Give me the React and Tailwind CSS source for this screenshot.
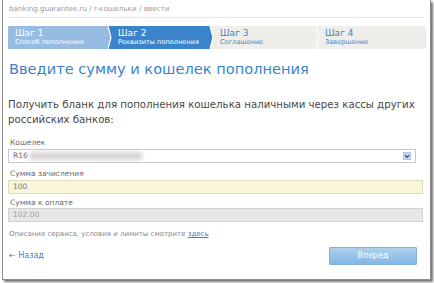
const StepSep = ({ left, right }) => (
	<svg width="5" height="23" viewBox="0 0 5 23" className="shrink-0 block">
		<polygon points="0,0 1,0 4,11.5 1,23 0,23" fill={left} />
		<polygon points="1,0 5,0 5,23 1,23 4,11.5" fill={right} />
		<polyline points="1,0 4,11.5 1,23" fill="none" stroke="#ffffff" strokeWidth="1.1" />
	</svg>
)

const Step = ({ n, title, active, done, className }) => {
	const bg = done ? 'bg-[#96bce2]' : active ? 'bg-[#3b84cb]' : 'bg-[#efeeea]'
	const color = done || active ? 'text-white' : 'text-[#3b84cb]'
	return (
		<div className={`${bg} ${color} h-[23px] flex flex-col justify-center ${className}`}>
			<div className='text-[9px] leading-[10px]'>Шаг {n}</div>
			<div className='text-[6.6px] leading-[9px]'>{title}</div>
		</div>
	)
}

const App = () => {
	return (
		<div className="w-[434px] h-[283px] bg-white overflow-hidden font-['DejaVu_Sans',sans-serif]">
			<div className='ml-[2px] w-[429px] h-[280px] bg-white border-l border-r border-b border-[#8c8c8c] shadow-[2px_2px_2px_rgba(0,0,0,0.55)] px-[5px] flex flex-col'>
				{/* breadcrumb */}
				<div className='h-[18px] pt-[4px] pl-[1px] mr-[1px] border-b border-[#e4e4e4] text-[7.2px] leading-[10px] text-[#9c9c9c]'>
					banking.guarantee.ru / r-кошельки / ввести
				</div>

				{/* steps */}
				<div className='mt-[8px] flex w-[418px]'>
					<Step n='1' title='Способ пополнения' done className='w-[99px] pl-[7px]' />
					<StepSep left='#96bce2' right='#3b84cb' />
					<Step n='2' title='Реквизиты пополнения' active className='w-[97px] pl-[6px]' />
					<StepSep left='#3b84cb' right='#efeeea' />
					<Step n='3' title='Соглашение' className='w-[101px] pl-[6px]' />
					<StepSep left='#efeeea' right='#efeeea' />
					<Step n='4' title='Завершение' className='flex-1 pl-[5px]' />
				</div>

				<h1 className='mt-[11px] pl-[1px] text-[14.6px] leading-[18px] text-[#3a83c9]'>
					Введите сумму и кошелек пополнения
				</h1>

				<p className='mt-[19px] text-[10.2px] leading-[15px] text-[#474747]'>
					Получить бланк для пополнения кошелька наличными через кассы других российских банков:
				</p>

				<div className='mt-[11px] text-[7.5px] leading-[10px] text-[#6a6a6a] pl-[2px]'>Кошелек</div>
				<div className='mt-[1px] w-[408px] h-[14px] border border-[#c9c9c9] bg-white flex items-center pl-[4px] pr-[4px]'>
					<span className='text-[7.5px] text-[#666]'>R16</span>
					<div className='ml-[2px] w-[112px] h-[8px] bg-[#d6d6d6] blur-[2px]'></div>
					<div className='ml-auto w-[8px] h-[8px] bg-[#c9d8ee] border border-[#b3c6e2] flex items-center justify-center'>
						<svg width="6" height="5" viewBox="0 0 6 5">
							<polyline points="1,1 3,3.5 5,1" fill="none" stroke="#2d5f9e" strokeWidth="1.3" />
						</svg>
					</div>
				</div>

				<div className='mt-[6px] text-[7.5px] leading-[10px] text-[#6a6a6a] pl-[2px]'>Сумма зачисления</div>
				<div className='mt-[1px] w-[415px] h-[14px] border border-[#e0dcb8] bg-[#f8f5d9] flex items-center pl-[4px]'>
					<span className='text-[7.5px] text-[#777]'>100</span>
				</div>

				<div className='mt-[4px] text-[7.5px] leading-[10px] text-[#6a6a6a] pl-[2px]'>Сумма к оплате</div>
				<div className='w-[415px] h-[14px] border border-[#d2d2d2] bg-[#e7e7e7] flex items-center pl-[4px]'>
					<span className='text-[7.5px] text-[#a0a0a0]'>102.00</span>
				</div>

				<div className='mt-[7px] pl-[1px] text-[7px] leading-[10px] text-[#8a8a8a]'>
					Описание сервиса, условия и лимиты смотрите <span className='text-[#3a83c9] underline'>здесь</span>
				</div>

				<div className='mt-[8px] flex items-center justify-between'>
					<span className='pl-[1px] text-[8px] text-[#3a83c9]'>← Назад</span>
					<button className='mr-[8px] w-[88px] h-[18px] rounded-[1px] border border-[#80b0dc] bg-gradient-to-b from-[#aed0ee] to-[#84b6e3] text-white text-[8px]'>
						Вперед
					</button>
				</div>
			</div>
		</div>
	)
}

export default App
